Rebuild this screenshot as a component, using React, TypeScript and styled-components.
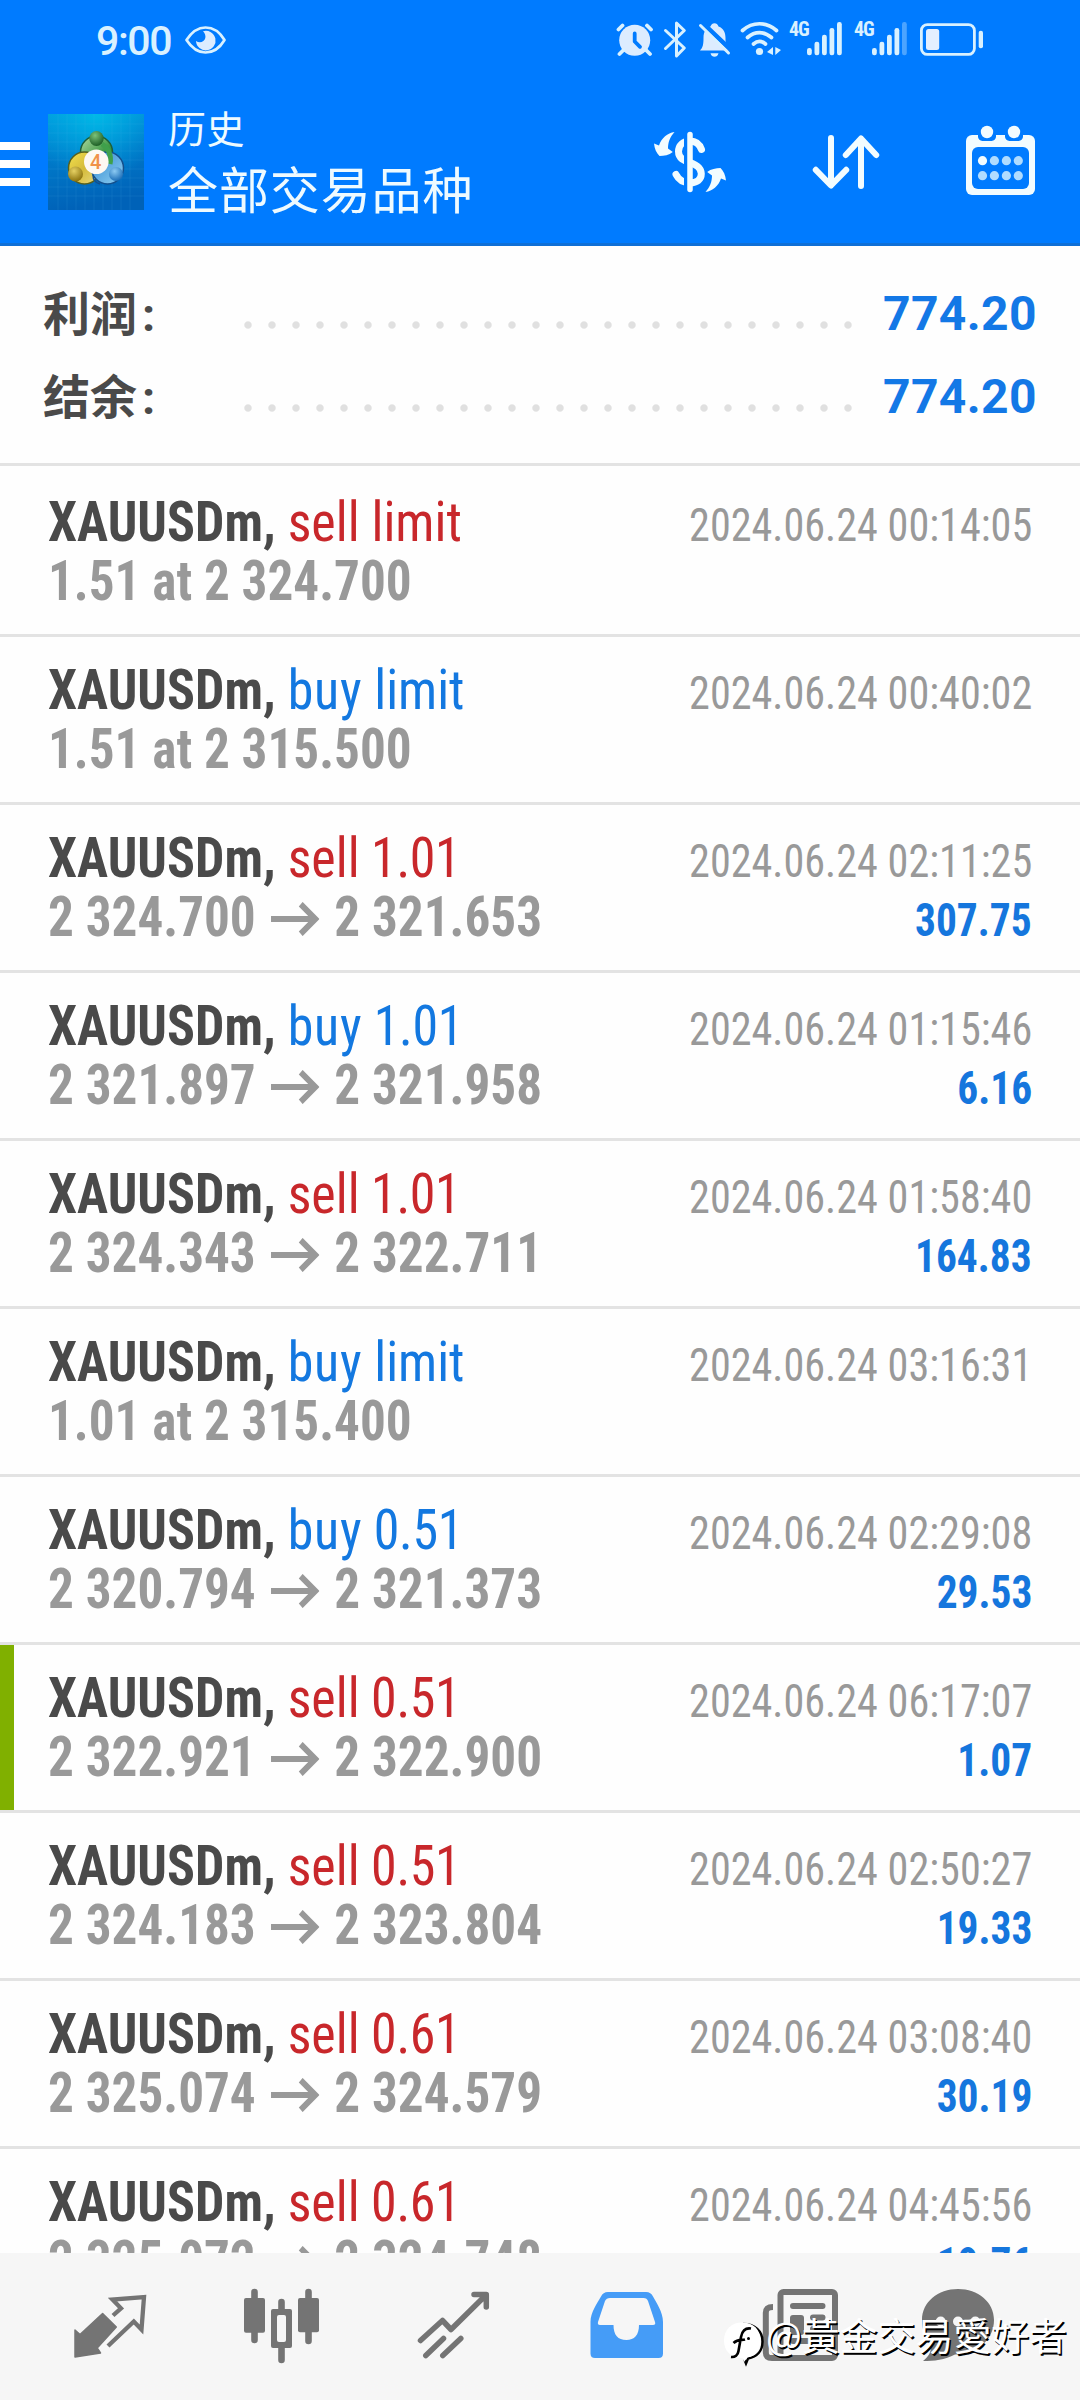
import React from 'react';
import styled, { createGlobalStyle } from 'styled-components';

const BLUE = '#007bff';
const STATUS = '#d9f1ff';
const NAV_GREY = '#747474';

const Global = createGlobalStyle`
  body { margin: 0; background: #fff; }
  *, *::before, *::after { box-sizing: border-box; }
  svg { display: block; flex: none; }
`;

const Screen = styled.div`
  width: 1080px;
  height: 2400px;
  display: flex;
  flex-direction: column;
  overflow: hidden;
  position: relative;
  background: #fefefe;
  font-family: Roboto, 'Noto Sans CJK SC', sans-serif;
`;

const Header = styled.header`
  height: 246px;
  flex: none;
  background: ${BLUE};
  border-bottom: 3px solid #0f6fd6;
`;

const StatusBar = styled.div`
  height: 80px;
  padding: 0 96px 0 96px;
  display: flex;
  align-items: center;
`;

const Clock = styled.span`
  font-size: 41px;
  font-weight: 500;
  line-height: 80px;
  letter-spacing: -1.4px;
  color: ${STATUS};
  margin-right: 13px;
  padding-top: 2px;
`;

const StatusIcons = styled.div`
  display: flex;
  align-items: flex-start;
  margin-left: auto;
`;

const NetLabel = styled.span<{ $left: number }>`
  width: 20px;
  margin-left: ${(p) => p.$left}px;
  font: 700 20px/20px 'Roboto Condensed', Roboto, sans-serif;
  letter-spacing: -1px;
  color: ${STATUS};
  padding-top: 1px;
`;

const Toolbar = styled.div`
  height: 163px;
  display: flex;
  align-items: flex-start;
`;

const MenuButton = styled.div`
  width: 30px;
  margin-top: 62px;
  display: flex;
  flex-direction: column;
  gap: 10px;
`;

const MenuLine = styled.span`
  height: 8px;
  background: #fff;
`;

const LogoBox = styled.div`
  margin: 34px 0 0 18px;
`;

const Titles = styled.div`
  margin: 20px 0 0 24px;
  display: flex;
  flex-direction: column;
  color: #eefaff;
  font-family: 'Noto Sans CJK SC', sans-serif;
  white-space: nowrap;
`;

const Section = styled.span`
  font-size: 38px;
  line-height: 54px;
  letter-spacing: 0.5px;
`;

const Title = styled.span`
  font-size: 50px;
  line-height: 66px;
  letter-spacing: 0.9px;
`;

const Actions = styled.div`
  margin: 42px 40px 0 auto;
  display: flex;
  gap: 75px;
`;

const Summary = styled.section`
  height: 220px;
  flex: none;
  padding: 26px 43px 0 43px;
  border-bottom: 3px solid #e3e3e3;
`;

const SummaryRow = styled.div`
  height: 83px;
  display: flex;
  align-items: flex-start;
`;

const SummaryLabel = styled.span`
  width: 193px;
  font: 700 47px/78px 'Noto Sans CJK SC', sans-serif;
  color: #4a4a4a;
`;

const Colon = styled.span`
  font-family: Roboto, sans-serif;
  margin-left: 5px;
`;

const Dots = styled.span`
  width: 624px;
  height: 83px;
  background: radial-gradient(circle at 12px 53px, #e0e0e0 3.2px, transparent 4.2px) 0 0 / 24px 83px repeat-x;
`;

const SummaryValue = styled.span`
  margin-left: auto;
  font-size: 48px;
  line-height: 83px;
  font-weight: 700;
  letter-spacing: 0.4px;
  color: #1378e6;
`;

const List = styled.main`
  flex: 1;
  min-height: 0;
  overflow: hidden;
  padding-top: 3px;
`;

const Deal = styled.article<{ $marked?: boolean }>`
  height: 168px;
  padding: 24px 48px 0;
  border-bottom: 3px solid #e3e3e3;
  box-shadow: ${(p) => (p.$marked ? 'inset 14px 0 0 #80b000' : 'none')};
  font-family: 'Roboto Condensed', Roboto, sans-serif;
`;

const Line = styled.div`
  height: 59px;
  display: flex;
  justify-content: space-between;
  align-items: baseline;
  line-height: 59px;
  white-space: pre;
`;

const Instrument = styled.div`
  font-size: 56px;
  transform: scaleX(0.928);
  transform-origin: left;
`;

const Symbol = styled.span`
  font-weight: 700;
  color: #4a4a4a;
`;

const Side = styled.span<{ $side: 'sell' | 'buy' }>`
  color: ${(p) => (p.$side === 'sell' ? '#c8272b' : '#1378e0')};
`;

const Action = styled.span<{ $side: 'sell' | 'buy' }>`
  letter-spacing: ${(p) => (p.$side === 'buy' ? 0.8 : 0)}px;
`;

const Volume = styled.span`
  letter-spacing: -0.4px;
`;

const Prices = styled.div`
  display: flex;
  align-items: baseline;
  font-size: 56px;
  font-weight: 700;
  color: #999;
  transform: scaleX(0.914);
  transform-origin: left;
`;

const ArrowSlot = styled.span`
  margin: 0 16px 0 17px;
`;

const Time = styled.time`
  font-size: 46px;
  color: #999;
  transform: scaleX(0.917);
  transform-origin: right;
`;

const Profit = styled.span`
  font-size: 46px;
  font-weight: 700;
  color: #1576dd;
  transform: scaleX(0.9);
  transform-origin: right;
`;

const TabBar = styled.nav`
  height: 147px;
  flex: none;
  display: flex;
  padding: 27px 24px 0;
  background: #f6f6f6;
`;

const Tab = styled.div`
  width: 172px;
  display: flex;
  justify-content: center;
`;

const Watermark = styled.div`
  position: absolute;
  left: 722px;
  top: 2307px;
  display: flex;
  align-items: flex-start;
  font: 400 37.9px/56px 'Noto Sans CJK TC', sans-serif;
  color: #fff;
  text-shadow: 1.5px 1.5px 0.5px #000;
  white-space: nowrap;
`;

const WatermarkMark = styled.span`
  margin-top: 12px;
`;

const Handle = styled.span`
  height: 56px;
  margin-top: -1px;
`;

type BoxProps = { x: number; y: number; w: number; h: number; children: React.ReactNode; left?: number };

const Placed = styled.svg<{ $left: number }>`
  margin-left: ${(p) => p.$left}px;
`;

function Glyph({ x, y, w, h, left = 0, children }: BoxProps) {
  return (
    <Placed $left={left} width={w} height={h} viewBox={`${x} ${y} ${w} ${h}`} fill="none" strokeLinecap="round" strokeLinejoin="round">
      {children}
    </Placed>
  );
}

function Eye() {
  return (
    <Glyph x={184} y={18} w={44} h={44}>
      <path d="M186.5 40C192 31.5 198 27.5 205.5 27.5S219.500 31.500 224.500 40C219.500 48.500 213 52.500 205.500 52.500S192 48.500 186.500 40Z" stroke={STATUS} strokeWidth="2.7" />
      <path d="M203 31.200A9.800 9.800 0 1 1 196 41C199.500 43.500 204.500 42 205.300 38C205.800 35.500 205 33 203 31.200Z" fill="#dcecff" />
    </Glyph>
  );
}

function Signal({ x, left, weak }: { x: number; left: number; weak?: boolean }) {
  const tops = [48, 41.7, 34.7, 28, 22];
  return (
    <Glyph x={x} y={18} w={35} h={44} left={left}>
      {tops.map((t, i) => (
        <rect key={t} x={x + i * 7.5} y={t} width="4.800" height={55.2 - t} rx="2.200" fill={STATUS} opacity={weak && i === 4 ? 0.35 : 1} />
      ))}
    </Glyph>
  );
}

function StatusRow() {
  return (
    <StatusIcons>
      <Glyph x={616} y={18} w={38} h={44}>
        <circle cx="634.700" cy="40.300" r="15.500" fill="#dcecff" />
        <path d="M618.500 29.500 622.500 25.500M651 29.500 647 25.500M623.500 50 619.500 54M646 50 650 54" stroke={STATUS} strokeWidth="3.800" />
        <path d="M634.700 33.500V41.500L640 46.800" stroke={BLUE} strokeWidth="3.800" />
      </Glyph>
      <Glyph x={662} y={18} w={26} h={44} left={8}>
        <path d="M665.500 30.500 684.300 48 676.500 56V23L684.300 30.500 665.500 48.500" stroke={STATUS} strokeWidth="3" />
      </Glyph>
      <Glyph x={697} y={18} w={36} h={44} left={9}>
        <path d="M700 50.500C703 47.500 703.500 44 703.500 38C703.500 31 706.500 27.500 710.500 26.500C711.500 22 717.500 22 718.500 26.500C724 28.500 725.500 33 725.500 38C725.500 44 726 47.500 729 50.500Z" fill="#dcecff" />
        <path d="M710.500 53.200H718.500C717.500 58 711.500 58 710.500 53.200Z" fill={STATUS} />
        <path d="M702 22.500 732 51" stroke={BLUE} strokeWidth="4.500" />
        <path d="M700.500 25.500 728.500 53" stroke={STATUS} strokeWidth="3" />
      </Glyph>
      <Glyph x={739} y={18} w={44} h={44} left={6}>
        <path d="M742.500 30.500C752.500 21.500 766.500 21.500 776.500 30.500M747.500 37.500C755 31 764 31 771.500 37.500M753.500 44C757.500 40.500 761.500 40.500 765.500 44" stroke={STATUS} strokeWidth="3.700" />
        <circle cx="759.500" cy="51.500" r="3.600" fill={STATUS} />
        <path d="M773 47V55L767 52ZM775.300 47V55L781 50Z" fill={STATUS} />
      </Glyph>
      <NetLabel $left={6}>4G</NetLabel>
      <Signal x={807} left={-2} />
      <NetLabel $left={12}>4G</NetLabel>
      <Signal x={872} left={-2} weak />
      <Glyph x={918} y={18} w={66} h={44} left={11}>
        <rect x="921.400" y="24.600" width="53" height="29.800" rx="6" stroke={STATUS} strokeWidth="2.800" />
        <rect x="926" y="29" width="13.200" height="21" rx="2.500" fill="#e4efff" />
        <rect x="978.700" y="30.700" width="4.300" height="17.600" rx="2" fill={STATUS} />
      </Glyph>
    </StatusIcons>
  );
}

function Logo() {
  const grid = [10, 19, 28, 37, 46, 55, 64, 73, 82];
  return (
    <svg width="96" height="96" viewBox="0 0 96 96">
      <defs>
        <linearGradient id="sea" x1="0" y1="0" x2="0.200" y2="1">
          <stop offset="0" stopColor="#009bdd" />
          <stop offset="0.500" stopColor="#0078c8" />
          <stop offset="1" stopColor="#0062b8" />
        </linearGradient>
        <radialGradient id="glow" cx="0.500" cy="0" r="0.700">
          <stop offset="0" stopColor="#00c2ea" stopOpacity="0.800" />
          <stop offset="1" stopColor="#00b7ea" stopOpacity="0" />
        </radialGradient>
        <linearGradient id="leaf" x1="0" y1="0" x2="1" y2="1">
          <stop offset="0" stopColor="#b4dca6" />
          <stop offset="0.600" stopColor="#3f9a45" />
          <stop offset="1" stopColor="#237a2d" />
        </linearGradient>
        <linearGradient id="gold" x1="0" y1="0" x2="1" y2="1">
          <stop offset="0" stopColor="#f3e14f" />
          <stop offset="0.500" stopColor="#d5bb3a" />
          <stop offset="1" stopColor="#e9dc86" />
        </linearGradient>
        <linearGradient id="sky" x1="0" y1="0" x2="1" y2="1">
          <stop offset="0" stopColor="#2f86cf" />
          <stop offset="1" stopColor="#8fd0f2" />
        </linearGradient>
        <radialGradient id="leafHead" cx="0.400" cy="0.300" r="0.700">
          <stop offset="0" stopColor="#7cc279" />
          <stop offset="1" stopColor="#1d5f26" />
        </radialGradient>
        <radialGradient id="goldHead" cx="0.400" cy="0.300" r="0.700">
          <stop offset="0" stopColor="#e6d163" />
          <stop offset="1" stopColor="#8c730e" />
        </radialGradient>
        <radialGradient id="skyHead" cx="0.400" cy="0.300" r="0.700">
          <stop offset="0" stopColor="#8ccaf2" />
          <stop offset="1" stopColor="#1d6fb8" />
        </radialGradient>
      </defs>
      <rect width="96" height="96" fill="url(#sea)" />
      <rect width="96" height="96" fill="url(#glow)" />
      <g stroke="#4fc0ee" strokeOpacity="0.120" strokeWidth="1">
        {grid.map((g) => (
          <path key={g} d={`M${g} 0V96M0 ${g}H96`} />
        ))}
      </g>
      <circle cx="48.500" cy="38" r="16" fill="url(#leaf)" stroke="#1d5f3a" strokeWidth="1.500" />
      <circle cx="36.500" cy="54" r="16" fill="url(#gold)" stroke="#56601f" strokeWidth="1.500" />
      <circle cx="59.500" cy="54" r="16" fill="url(#sky)" stroke="#134f8c" strokeWidth="1.500" />
      <path d="M54 30C60 34 64 41 62 50" stroke="#3fa04b" strokeWidth="5" fill="none" />
      <path d="M45 61C45 66 48 69 52 70" stroke="#134f8c" strokeWidth="1.500" fill="none" />
      <ellipse cx="48.500" cy="24.500" rx="7.200" ry="7.500" fill="url(#leafHead)" />
      <circle cx="27.500" cy="60" r="7.500" fill="url(#goldHead)" />
      <circle cx="68" cy="60" r="7" fill="url(#skyHead)" />
      <circle cx="48.300" cy="47.800" r="12.300" fill="#fdf8f2" />
      <text x="47.800" y="55" textAnchor="middle" fontFamily="Roboto, sans-serif" fontSize="20" fontWeight="500" fill="#f0924a">4</text>
    </svg>
  );
}

function CurrencyIcon() {
  return (
    <Glyph x={650} y={122} w={80} h={80}>
      <path d="M701.500 149.500C699.500 144 696 141 690 141C683 141 678.500 145.500 678.500 151.500C678.500 158.500 684 160.500 690 162.500C696.500 164.700 701.300 167.500 701.300 173.800C701.300 179.500 697 182.800 690 182.800C683.500 182.800 678.500 179.500 676 174.500" stroke="#f2fcff" strokeWidth="7" />
      <path d="M687.500 134V190" stroke={BLUE} strokeWidth="7" strokeLinecap="butt" />
      <path d="M690 134.500V189.500" stroke="#f2fcff" strokeWidth="5.500" />
      <path d="M674.500 132C667.500 133 661.500 138 659 145.500L654 143.500C654.500 149 656.500 153 659.500 156C664 156 669 155 672.800 152L668 148.500C668 142 670 137 674.500 132Z" fill="#f2fcff" />
      <path d="M705.500 192C712.500 191 718.500 186 721 178.500L726 180.500C725.500 175 723.500 171 720.500 168C716 168 711 169 707.200 172L712 175.500C712 182 710 187 705.500 192Z" fill="#f2fcff" />
    </Glyph>
  );
}

function SortIcon() {
  return (
    <Glyph x={805} y={122} w={80} h={80}>
      <path d="M831 138V185M815.800 169.800 831 185.500 846.200 169.800M861 186V139M845.800 155 861 138.500 876.200 155" stroke="#f2fcff" strokeWidth="6" />
    </Glyph>
  );
}

function CalendarIcon() {
  const cols = [982.500, 994.400, 1006.400, 1018.300];
  return (
    <Glyph x={960} y={122} w={80} h={80}>
      <rect x="966" y="135" width="69" height="60" rx="6" fill="#f2fcff" />
      <path d="M978 132V136A4.500 4.500 0 0 0 982.500 141H991.500A4.500 4.500 0 0 0 996 136V132ZM1005 132V136A4.500 4.500 0 0 0 1009.500 141H1018.500A4.500 4.500 0 0 0 1023 136V132Z" fill={BLUE} />
      <rect x="972" y="147" width="57" height="42" rx="6" fill={BLUE} />
      <circle cx="987" cy="132" r="6.200" fill="#f2fcff" />
      <circle cx="1014" cy="132" r="6.200" fill="#f2fcff" />
      {cols.map((c, i) => (
        <React.Fragment key={c}>
          <circle cx={c} cy="160.700" r="4.600" fill={i === 0 ? '#f2fcff' : '#b0dcff'} />
          <circle cx={c} cy="175.700" r="4.600" fill="#b0dcff" />
        </React.Fragment>
      ))}
    </Glyph>
  );
}

function PriceArrow() {
  return (
    <svg width="53" height="34" viewBox="0 0 53 34" fill="none" stroke="#999" strokeWidth="6.200">
      <path d="M0 17H48M32.500 2.200 48.500 17 32.500 31.800" />
    </svg>
  );
}

function QuotesIcon() {
  return (
    <Glyph x={70} y={2280} w={80} h={90}>
      <path d="M75 2330 80 2334.500 102.600 2313.500 116.300 2327 97.200 2348 100.500 2353 75 2357Z" fill={NAV_GREY} stroke={NAV_GREY} strokeWidth="1.500" />
      <path d="M113 2315.500 121 2308.300 112.500 2299.500 144 2297 141.500 2329.500 133.800 2321.500 108 2346" stroke={NAV_GREY} strokeWidth="4.300" strokeLinecap="butt" strokeLinejoin="miter" />
    </Glyph>
  );
}

function CandlesIcon() {
  return (
    <Glyph x={242} y={2280} w={80} h={90}>
      <path d="M254.500 2292V2340M281.500 2302V2360M308.500 2292V2341" stroke={NAV_GREY} strokeWidth="6.600" />
      <g fill={NAV_GREY}>
        <rect x="244" y="2298" width="21" height="34.700" rx="2" />
        <rect x="271" y="2309" width="21" height="39" rx="2" />
        <rect x="298" y="2298" width="21" height="34.300" rx="2" />
      </g>
      <rect x="277" y="2315" width="9" height="27" rx="2" fill="#f6f6f6" />
    </Glyph>
  );
}

function TrendIcon() {
  return (
    <Glyph x={414} y={2280} w={80} h={90}>
      <path d="M420.500 2340.500 442.500 2320.500 451 2329.500 486 2295M474 2294.500H486.300V2307M425.800 2355.500 443.500 2338.500M442.800 2355.500 460.800 2338.500" stroke={NAV_GREY} strokeWidth="5.500" />
    </Glyph>
  );
}

function InboxIcon() {
  return (
    <Glyph x={586} y={2280} w={80} h={90}>
      <path fillRule="evenodd" fill="#459cf7" d="M608 2292H646C649.500 2292 651.500 2293.500 653 2296.500C656.500 2303 663 2312 663 2322V2353.500C663 2356.500 661.500 2358 658.500 2358H595C592 2358 590.500 2356.500 590.500 2353.500V2322C590.500 2312 597.500 2303 601 2296.500C602.500 2293.500 604.500 2292 608 2292ZM610 2298C607.500 2298 606 2299 605 2301L598 2322C597.500 2324 598.200 2325 600 2325H613.500C613.500 2335 618 2340 626.300 2340C634.500 2340 639 2335 639 2325H653C655 2325 655.700 2324 655 2322L648 2301C647.200 2299 646 2298 643.500 2298Z" />
    </Glyph>
  );
}

function NewsIcon() {
  return (
    <Glyph x={756} y={2280} w={84} h={90}>
      <g stroke={NAV_GREY} strokeWidth="6">
        <rect x="780.500" y="2292" width="54.500" height="66" rx="3" />
        <path d="M773 2307C768 2307 765.800 2308.500 765.800 2313V2352C765.800 2356.500 768 2358 772 2358H785" strokeLinecap="butt" />
        <path d="M793 2306H822.500M813 2317.500H822.500M813 2329H822.500M793 2341H822.500" />
      </g>
      <rect x="790" y="2315" width="14" height="20" rx="3" fill={NAV_GREY} />
    </Glyph>
  );
}

function ChatIcon() {
  return (
    <Glyph x={915} y={2280} w={110} h={90}>
      <path d="M958 2289C978 2289 994 2302 994 2320C994 2339 978 2354 955 2354.500C945 2360 934 2361 923 2361C928 2357 932 2352 930.500 2345C925 2338 922 2330 922 2320C922 2302 938 2289 958 2289Z" fill={NAV_GREY} />
      <g fill="#f6f6f6">
        <circle cx="940.700" cy="2321.500" r="5" />
        <circle cx="958" cy="2321.500" r="5" />
        <circle cx="975.300" cy="2321.500" r="5" />
      </g>
    </Glyph>
  );
}

function WatermarkLogo() {
  return (
    <svg width="44" height="48" viewBox="0 0 44 48" fill="none">
      <path d="M21 5C33 5 40.500 12 40.500 22.500C40.500 32 35 38 26 39.500L24 44.500L22 39.500" stroke="#000" strokeWidth="2.500" />
      <path d="M20 3.500C32 3.500 38.500 11 38.500 21.500C38.500 31 34 37 25.500 38.500L22 43L20.500 39C9 39 2 32 2 21.500C2 11 9 3.500 20 3.500Z" fill="#fff" />
      <path d="M29 9.500C23 8.500 20 12 19 18L16.500 32C16 36 13 38.500 9 38M11.500 24C16 19.500 20 21.500 23 20.500" stroke="#000" strokeWidth="2.600" />
      <circle cx="26.500" cy="19.500" r="1.500" fill="#000" />
    </svg>
  );
}

type DealData = {
  side: 'sell' | 'buy';
  volume?: string;
  from?: string;
  to?: string;
  order?: string;
  time: string;
  profit?: string;
  marked?: boolean;
};

const deals: DealData[] = [
  { side: 'sell', order: '1.51 at 2 324.700', time: '00:14:05' },
  { side: 'buy', order: '1.51 at 2 315.500', time: '00:40:02' },
  { side: 'sell', volume: '1.01', from: '2 324.700', to: '2 321.653', time: '02:11:25', profit: '307.75' },
  { side: 'buy', volume: '1.01', from: '2 321.897', to: '2 321.958', time: '01:15:46', profit: '6.16' },
  { side: 'sell', volume: '1.01', from: '2 324.343', to: '2 322.711', time: '01:58:40', profit: '164.83' },
  { side: 'buy', order: '1.01 at 2 315.400', time: '03:16:31' },
  { side: 'buy', volume: '0.51', from: '2 320.794', to: '2 321.373', time: '02:29:08', profit: '29.53' },
  { side: 'sell', volume: '0.51', from: '2 322.921', to: '2 322.900', time: '06:17:07', profit: '1.07', marked: true },
  { side: 'sell', volume: '0.51', from: '2 324.183', to: '2 323.804', time: '02:50:27', profit: '19.33' },
  { side: 'sell', volume: '0.61', from: '2 325.074', to: '2 324.579', time: '03:08:40', profit: '30.19' },
  { side: 'sell', volume: '0.61', from: '2 325.072', to: '2 324.748', time: '04:45:56', profit: '19.76' },
];

function DealRow({ deal }: { deal: DealData }) {
  return (
    <Deal $marked={deal.marked}>
      <Line>
        <Instrument>
          <Symbol>XAUUSDm, </Symbol>
          <Side $side={deal.side}>
            <Action $side={deal.side}>{deal.side}</Action>
            {deal.volume ? <Volume> {deal.volume}</Volume> : ' limit'}
          </Side>
        </Instrument>
        <Time>2024.06.24 {deal.time}</Time>
      </Line>
      <Line>
        {deal.order ? (
          <Prices>{deal.order}</Prices>
        ) : (
          <Prices>
            {deal.from}
            <ArrowSlot>
              <PriceArrow />
            </ArrowSlot>
            {deal.to}
          </Prices>
        )}
        {deal.profit && <Profit>{deal.profit}</Profit>}
      </Line>
    </Deal>
  );
}

export default function App() {
  return (
    <Screen>
      <Global />
      <Header>
        <StatusBar>
          <Clock>9:00</Clock>
          <Eye />
          <StatusRow />
        </StatusBar>
        <Toolbar>
          <MenuButton>
            <MenuLine />
            <MenuLine />
            <MenuLine />
          </MenuButton>
          <LogoBox>
            <Logo />
          </LogoBox>
          <Titles>
            <Section>历史</Section>
            <Title>全部交易品种</Title>
          </Titles>
          <Actions>
            <CurrencyIcon />
            <SortIcon />
            <CalendarIcon />
          </Actions>
        </Toolbar>
      </Header>
      <Summary>
        {['利润', '结余'].map((label) => (
          <SummaryRow key={label}>
            <SummaryLabel>
              {label}
              <Colon>:</Colon>
            </SummaryLabel>
            <Dots />
            <SummaryValue>774.20</SummaryValue>
          </SummaryRow>
        ))}
      </Summary>
      <List>
        {deals.map((deal, i) => (
          <DealRow key={i} deal={deal} />
        ))}
      </List>
      <TabBar>
        <Tab><QuotesIcon /></Tab>
        <Tab><CandlesIcon /></Tab>
        <Tab><TrendIcon /></Tab>
        <Tab><InboxIcon /></Tab>
        <Tab><NewsIcon /></Tab>
        <Tab><ChatIcon /></Tab>
      </TabBar>
      <Watermark>
        <WatermarkMark>
          <WatermarkLogo />
        </WatermarkMark>
        <Handle>@黃金交易愛好者</Handle>
      </Watermark>
    </Screen>
  );
}
